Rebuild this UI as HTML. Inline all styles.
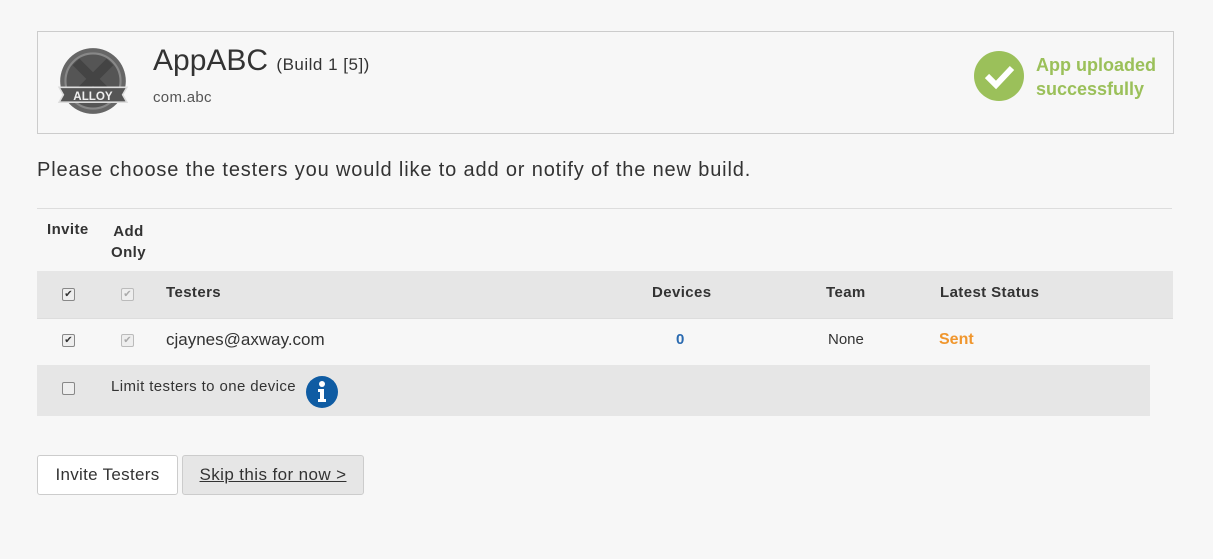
<!DOCTYPE html><html><head><style>
body{margin:0;width:1213px;height:559px;background:#f7f7f7;font-family:"Liberation Sans",sans-serif;color:#333;position:relative;overflow:hidden}
.a{position:absolute}
.cb{position:absolute;width:11px;height:11px;border:1px solid #888;border-radius:2px;background:#eee;font-size:10px;line-height:11px;text-align:center}
.b{font-weight:bold;font-size:15px;letter-spacing:0.4px}
</style></head><body>
<div class="a" style="left:37px;top:31px;width:1135px;height:101px;border:1px solid #ccc"></div>
<svg class="a" style="left:57px;top:47px" width="72" height="68" viewBox="0 0 68 64">
<circle cx="34" cy="32" r="31" fill="#666"/><circle cx="34" cy="32" r="26" fill="#555" stroke="#888" stroke-width="2"/>
<path d="M18 14 L50 46 M50 14 L18 46" stroke="#444" stroke-width="9"/>
<path d="M2 38 h64 l-4 7 4 7 h-64 l4 -7z" fill="#555" stroke="#ddd" stroke-width="1.5"/>
<text x="34" y="50" font-size="11" font-weight="bold" fill="#eee" text-anchor="middle" font-family="Liberation Sans">ALLOY</text></svg>
<div class="a" style="left:153px;top:44px;font-size:30px">AppABC <span style="font-size:17px;letter-spacing:0.5px">(Build 1 [5])</span></div>
<div class="a" style="left:153px;top:89px;font-size:15px;color:#555;letter-spacing:0.3px">com.abc</div>
<svg class="a" style="left:974px;top:51px" width="50" height="50"><circle cx="25" cy="25" r="25" fill="#9bc05a"/><path d="M13 25 l9 9 l16 -17" stroke="#fff" stroke-width="6" fill="none"/></svg>
<div class="a" style="left:1036px;top:53px;font-size:18px;font-weight:bold;color:#9bc05a;line-height:24px">App uploaded<br>successfully</div>
<div class="a" style="left:37px;top:159px;font-size:20px;letter-spacing:0.85px">Please choose the testers you would like to add or notify of the new build.</div>
<div class="a" style="left:37px;top:208px;width:1135px;border-top:1px solid #ddd"></div>
<div class="a b" style="left:47px;top:221px">Invite</div>
<div class="a b" style="left:111px;top:221px;text-align:center;line-height:21px">Add<br>Only</div>
<div class="a" style="left:37px;top:271px;width:1136px;height:47px;background:#e6e6e6"></div>
<div class="cb" style="left:62px;top:288px">✔</div><div class="cb" style="left:121px;top:288px;color:#aaa;border-color:#bbb">✔</div>
<div class="a b" style="left:166px;top:284px">Testers</div>
<div class="a b" style="left:652px;top:284px">Devices</div>
<div class="a b" style="left:826px;top:284px">Team</div>
<div class="a b" style="left:940px;top:284px">Latest Status</div>
<div class="a" style="left:37px;top:318px;width:1136px;border-top:1px solid #ddd"></div>
<div class="cb" style="left:62px;top:334px">✔</div><div class="cb" style="left:121px;top:334px;color:#aaa;border-color:#bbb">✔</div>
<div class="a" style="left:166px;top:330px;font-size:17px">cjaynes@axway.com</div>
<div class="a" style="left:676px;top:331px;font-size:15px;font-weight:bold;color:#2a6ab0">0</div>
<div class="a" style="left:828px;top:331px;font-size:15px">None</div>
<div class="a" style="left:939px;top:331px;font-size:16px;font-weight:bold;color:#f0962d">Sent</div>
<div class="a" style="left:37px;top:365px;width:1113px;height:51px;background:#e6e6e6"></div>
<div class="cb" style="left:62px;top:382px"></div>
<div class="a" style="left:111px;top:378px;font-size:15px;letter-spacing:0.4px">Limit testers to one device</div>
<svg class="a" style="left:306px;top:376px" width="32" height="32"><circle cx="16" cy="16" r="16" fill="#0f5ca3"/><circle cx="16" cy="8" r="3" fill="#fff"/><path d="M12 13h6v10h2v3h-8v-3h2v-7h-2z" fill="#fff"/></svg>
<div class="a" style="left:37px;top:455px;width:139px;height:38px;border:1px solid #ccc;background:#fff;border-radius:3px;font-size:17px;line-height:38px;text-align:center;letter-spacing:0.3px">Invite Testers</div>
<div class="a" style="left:182px;top:455px;width:180px;height:38px;border:1px solid #ccc;background:#e6e6e6;border-radius:3px;font-size:17px;line-height:38px;text-align:center;text-decoration:underline;letter-spacing:0.4px">Skip this for now &gt;</div>
</body></html>
